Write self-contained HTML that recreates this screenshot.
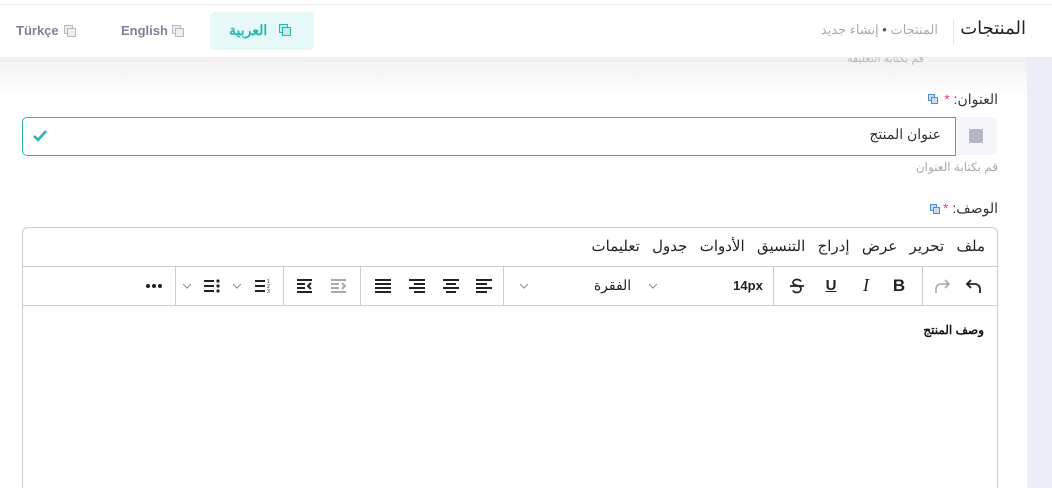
<!DOCTYPE html>
<html style="width:1052px;height:488px;overflow:hidden"><head><meta charset="utf-8"><style>
*{box-sizing:border-box;margin:0;padding:0}
body{width:1052px;height:488px;overflow:hidden;background:#fff;font-family:"Liberation Sans","Noto Sans CJK SC",sans-serif;position:relative}
.a{position:absolute}
.strip{left:1027px;top:57px;width:25px;height:431px;background:#eceef7}
.shadow{left:0;top:57px;width:1027px;height:40px;background:linear-gradient(#f1f1f4,#fff)}
.hdr{left:0;top:4px;width:1052px;height:53px;background:#fff;border-top:1px solid #ececef}
.t{white-space:nowrap}
.tb{top:266px;height:39px;display:flex;align-items:center;justify-content:center;color:#222}
.sep{top:266px;width:1px;height:39px;background:#ccc}
svg{display:block}
</style></head><body>
<div class="a strip"></div>
<div class="a shadow"></div>
<div class="a t" style="right:128px;top:52px;font-size:11px;color:#b8b8c0">قم بكتابة التعليقة</div>
<div class="a hdr"></div>
<div class="a t" style="right:26px;top:18px;font-size:18px;color:#222;direction:rtl">المنتجات</div>
<div class="a" style="left:953px;top:20px;width:1px;height:24px;background:#e4e4e8"></div>
<div class="a t" style="right:114px;top:22px;font-size:13px;color:#a9a9b3;direction:rtl">المنتجات <span style="color:#555">•</span> إنشاء جديد</div>
<div class="a" style="left:210px;top:12px;width:104px;height:38px;background:#e6f8f8;border-radius:5px"></div>
<div class="a t" style="left:229px;top:22px;font-size:14px;font-weight:bold;color:#2bb5ad">العربية</div>
<svg class="a" style="left:279px;top:24px" width="12" height="12"><rect x=".5" y=".5" width="8" height="8" fill="#bfeeee" stroke="#2bb5ad"/><rect x="3.5" y="3.5" width="8" height="8" fill="#bfeeee" stroke="#2bb5ad"/></svg>
<div class="a t" style="left:121px;top:23px;font-size:13px;font-weight:bold;color:#7e8299">English</div>
<svg class="a" style="left:172px;top:25px" width="12" height="12"><rect x=".5" y=".5" width="8" height="8" fill="#eee" stroke="#bbb"/><rect x="3.5" y="3.5" width="8" height="8" fill="#eee" stroke="#bbb"/></svg>
<div class="a t" style="left:16px;top:23px;font-size:13px;font-weight:bold;color:#7e8299">Türkçe</div>
<svg class="a" style="left:64px;top:25px" width="12" height="12"><rect x=".5" y=".5" width="8" height="8" fill="#eee" stroke="#bbb"/><rect x="3.5" y="3.5" width="8" height="8" fill="#eee" stroke="#bbb"/></svg>

<div class="a t" style="right:54px;top:91px;font-size:14px;color:#333;direction:rtl">العنوان: <span style="color:#f1416c">*</span></div>
<svg class="a" style="left:928px;top:94px" width="10" height="10"><rect x=".5" y=".5" width="6" height="6" fill="#cde" stroke="#4a8fd8"/><rect x="3.5" y="3.5" width="6" height="6" fill="#cde" stroke="#4a8fd8"/></svg>
<div class="a" style="left:955px;top:117px;width:42px;height:38px;background:#f5f6f9;border-radius:0 5px 5px 0"></div>
<div class="a" style="left:969px;top:129px;width:14px;height:14px;background:#b5b5c3"></div>
<div class="a" style="left:22px;top:117px;width:934px;height:39px;border:1px solid #2bb5ad;border-radius:5px 0 0 5px"></div>
<div class="a t" style="right:111px;top:126px;font-size:14px;color:#333;direction:rtl">عنوان المنتج</div>
<svg class="a" style="left:32px;top:129px" width="16" height="14"><path d="M2 7l4 4 8-9" fill="none" stroke="#2bb5ad" stroke-width="2.6"/></svg>
<div class="a t" style="right:54px;top:160px;font-size:12px;color:#a9a9b3;direction:rtl">قم بكتابة العنوان</div>

<div class="a t" style="right:54px;top:200px;font-size:14px;color:#333;direction:rtl">الوصف: <span style="color:#f1416c">*</span></div>
<svg class="a" style="left:930px;top:204px" width="10" height="10"><rect x=".5" y=".5" width="6" height="6" fill="#cde" stroke="#4a8fd8"/><rect x="3.5" y="3.5" width="6" height="6" fill="#cde" stroke="#4a8fd8"/></svg>

<div class="a" style="left:22px;top:227px;width:976px;height:261px;border:1px solid #ccc;border-bottom:none;border-radius:6px 6px 0 0"></div>
<div class="a" style="left:23px;top:266px;width:974px;height:1px;background:#ccc"></div>
<div class="a" style="left:23px;top:305px;width:974px;height:1px;background:#ccc"></div>
<div class="a t" style="right:67px;top:237px;font-size:15px;color:#222;direction:rtl;word-spacing:2px">ملف&nbsp; تحرير&nbsp; عرض&nbsp; إدراج&nbsp; التنسيق&nbsp; الأدوات&nbsp; جدول&nbsp; تعليمات</div>

<svg class="a" style="left:964px;top:277px" width="20" height="18"><path d="M7 3L3 7l4 4M3 7h8a5 5 0 015 5v4" fill="none" stroke="#222" stroke-width="1.8"/></svg>
<svg class="a" style="left:932px;top:277px" width="20" height="18"><path d="M13 3l4 4-4 4M17 7H9a5 5 0 00-5 5v4" fill="none" stroke="#aaa" stroke-width="1.6"/></svg>
<div class="a sep" style="left:922px"></div>
<div class="a tb t" style="left:889px;width:20px;font-size:17px;font-weight:bold">B</div>
<div class="a tb t" style="left:856px;width:20px;font-size:18px;font-style:italic;font-family:'Liberation Serif',serif">I</div>
<div class="a tb t" style="left:821px;width:20px;font-size:15px;font-weight:bold;text-decoration:underline">U</div>
<svg class="a" style="left:788px;top:277px" width="18" height="18"><path d="M13 4.5C12 3 10.5 2.5 9 2.5c-2.5 0-4 1.3-4 3S6.5 8 9 8.5s4 1.5 4 3.5-1.7 3.5-4 3.5c-1.8 0-3.3-.7-4.2-2M2 9h14" fill="none" stroke="#222" stroke-width="1.7"/></svg>
<div class="a sep" style="left:773px"></div>
<div class="a tb t" style="left:730px;width:36px;font-size:13px;font-weight:bold">14px</div>
<svg class="a" style="left:647px;top:281px" width="12" height="10"><path d="M2 3l4 4 4-4" fill="none" stroke="#999" stroke-width="1.2"/></svg>
<div class="a tb t" style="left:590px;width:45px;font-size:14px;direction:rtl">الفقرة</div>
<svg class="a" style="left:518px;top:281px" width="12" height="10"><path d="M2 3l4 4 4-4" fill="none" stroke="#999" stroke-width="1.2"/></svg>
<div class="a sep" style="left:503px"></div>
<svg class="a" style="left:475px;top:278px" width="18" height="16"><path d="M1 2h16M1 6h11M1 10h16M1 14h11" stroke="#222" stroke-width="2"/></svg>
<svg class="a" style="left:442px;top:278px" width="18" height="16"><path d="M1 2h16M4 6h10M1 10h16M4 14h10" stroke="#222" stroke-width="2"/></svg>
<svg class="a" style="left:408px;top:278px" width="18" height="16"><path d="M1 2h16M6 6h11M1 10h16M6 14h11" stroke="#222" stroke-width="2"/></svg>
<svg class="a" style="left:374px;top:278px" width="18" height="16"><path d="M1 2h16M1 6h16M1 10h16M1 14h16" stroke="#222" stroke-width="2"/></svg>
<div class="a sep" style="left:360px"></div>
<svg class="a" style="left:330px;top:278px" width="18" height="16"><path d="M1 2h15M1 6h8M1 10h8M1 14h15M12 5l3 3-3 3" fill="none" stroke="#aaa" stroke-width="2"/></svg>
<svg class="a" style="left:296px;top:278px" width="18" height="16"><path d="M1 2h15M1 6h8M1 10h8M1 14h15M15 5l-3 3 3 3" fill="none" stroke="#222" stroke-width="2"/></svg>
<div class="a sep" style="left:283px"></div>
<svg class="a" style="left:254px;top:278px" width="18" height="16"><path d="M1 3h10M1 8h10M1 13h10" stroke="#222" stroke-width="2"/><text x="13" y="5" font-size="5" font-family="Liberation Sans" fill="#222">1</text><text x="13" y="10" font-size="5" font-family="Liberation Sans" fill="#222">2</text><text x="13" y="15" font-size="5" font-family="Liberation Sans" fill="#222">3</text></svg>
<svg class="a" style="left:231px;top:281px" width="12" height="10"><path d="M2 3l4 4 4-4" fill="none" stroke="#999" stroke-width="1.2"/></svg>
<svg class="a" style="left:203px;top:278px" width="18" height="16"><path d="M1 3h10M1 8h10M1 13h10" stroke="#222" stroke-width="2"/><circle cx="15" cy="3" r="1.6" fill="#222"/><circle cx="15" cy="8" r="1.6" fill="#222"/><circle cx="15" cy="13" r="1.6" fill="#222"/></svg>
<svg class="a" style="left:181px;top:281px" width="12" height="10"><path d="M2 3l4 4 4-4" fill="none" stroke="#999" stroke-width="1.2"/></svg>
<div class="a sep" style="left:175px"></div>
<svg class="a" style="left:145px;top:282px" width="18" height="8"><circle cx="3" cy="4" r="2" fill="#222"/><circle cx="9" cy="4" r="2" fill="#222"/><circle cx="15" cy="4" r="2" fill="#222"/></svg>

<div class="a t" style="right:68px;top:323px;font-size:12px;font-weight:bold;color:#111;direction:rtl">وصف المنتج</div>
</body></html>
